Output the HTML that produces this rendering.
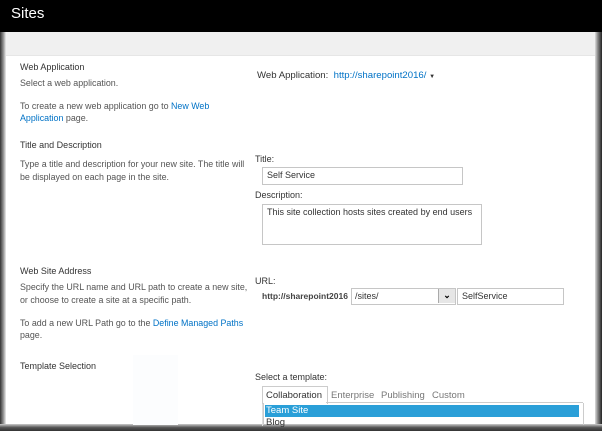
<!DOCTYPE html>
<html><head><style>
body{margin:0;width:602px;height:431px;overflow:hidden;background:#fff;font-family:"Liberation Sans",sans-serif;position:relative}
.a{position:absolute;white-space:nowrap}
.s{font-size:8.9px;color:#555}
.h{font-size:9px;color:#333}
.l{color:#0072c6}
.in{position:absolute;border:1px solid #c6c6c6;background:#fff;font-size:9px;color:#333;box-sizing:border-box;padding:2px 4px}
</style></head><body>
<div class="a" style="left:0;top:0;width:602px;height:32px;background:#000"></div>
<div class="a" style="left:11px;top:5px;font-size:15px;color:#fff">Sites</div>
<div class="a" style="left:0;top:32px;width:602px;height:23px;background:#f0f0f0;border-bottom:1px solid #e6e6e6"></div>
<div class="a" style="left:0;top:32px;width:6px;height:399px;background:linear-gradient(90deg,#333,#999 60%,#eee)"></div>
<div class="a" style="left:595px;top:32px;width:7px;height:399px;background:linear-gradient(90deg,#ddd,#888 40%,#222)"></div>
<div class="a" style="left:0;top:424px;width:602px;height:7px;background:linear-gradient(180deg,#ccc,#555 50%,#333)"></div>

<div class="a h" style="left:20px;top:62px">Web Application</div>
<div class="a s" style="left:20px;top:78px">Select a web application.</div>
<div class="a s" style="left:20px;top:101px">To create a new web application go to <span class="l">New Web</span></div>
<div class="a s" style="left:20px;top:113px"><span class="l">Application</span> page.</div>
<div class="a h" style="left:257px;top:70px;font-size:9.6px">Web Application:&nbsp; <span class="l">http://sharepoint2016/</span> <span style="font-size:6px">&#9660;</span></div>

<div class="a h" style="left:20px;top:140px">Title and Description</div>
<div class="a s" style="left:20px;top:159px">Type a title and description for your new site. The title will</div>
<div class="a s" style="left:20px;top:172px">be displayed on each page in the site.</div>
<div class="a h" style="left:255px;top:154px">Title:</div>
<div class="in" style="left:262px;top:167px;width:201px;height:18px">Self Service</div>
<div class="a h" style="left:255px;top:190px">Description:</div>
<div class="in" style="left:262px;top:204px;width:220px;height:41px">This site collection hosts sites created by end users</div>

<div class="a h" style="left:20px;top:266px">Web Site Address</div>
<div class="a s" style="left:20px;top:282px">Specify the URL name and URL path to create a new site,</div>
<div class="a s" style="left:20px;top:295px">or choose to create a site at a specific path.</div>
<div class="a s" style="left:20px;top:318px">To add a new URL Path go to the <span class="l">Define Managed Paths</span></div>
<div class="a s" style="left:20px;top:330px">page.</div>
<div class="a h" style="left:255px;top:276px">URL:</div>
<div class="a" style="left:262px;top:291px;font-size:8.5px;font-weight:bold;color:#444">http://sharepoint2016</div>
<div class="in" style="left:351px;top:288px;width:105px;height:17px;padding:2px 3px">/sites/</div>
<div class="a" style="left:438px;top:289px;width:16px;height:14px;background:#e6e6e6;border-left:1px solid #aaa;font-size:9px;font-weight:bold;text-align:center;line-height:12px">&#8964;</div>
<div class="in" style="left:457px;top:288px;width:107px;height:17px">SelfService</div>

<div class="a h" style="left:20px;top:361px">Template Selection</div>
<div class="a" style="left:133px;top:355px;width:45px;height:70px;background:#fcfdfe"></div>
<div class="a h" style="left:255px;top:372px">Select a template:</div>
<div class="a" style="left:262px;top:386px;width:321px;height:40px;border-left:1px solid #ddd"></div>
<div class="a" style="left:262px;top:386px;width:64px;height:17px;border:1px solid #ccc;border-bottom:none;background:#fff"></div>
<div class="a" style="left:266px;top:390px;font-size:9.5px;color:#333">Collaboration</div>
<div class="a" style="left:331px;top:390px;font-size:9.5px;color:#777">Enterprise</div>
<div class="a" style="left:381px;top:390px;font-size:9.5px;color:#777">Publishing</div>
<div class="a" style="left:432px;top:390px;font-size:9.5px;color:#777">Custom</div>
<div class="a" style="left:326px;top:402px;width:257px;height:0;border-top:1px solid #ccc"></div>
<div class="a" style="left:263px;top:403px;width:319px;height:22px;border-left:1px solid #ccc;border-right:1px solid #ccc"></div>
<div class="a" style="left:265px;top:405px;width:314px;height:12px;background:#2a9fd8;color:#fff;font-size:9.5px;line-height:12px;padding-left:1px;box-sizing:border-box">Team Site</div>
<div class="a" style="left:266px;top:417px;font-size:9.5px;color:#333">Blog</div>
</body></html>
